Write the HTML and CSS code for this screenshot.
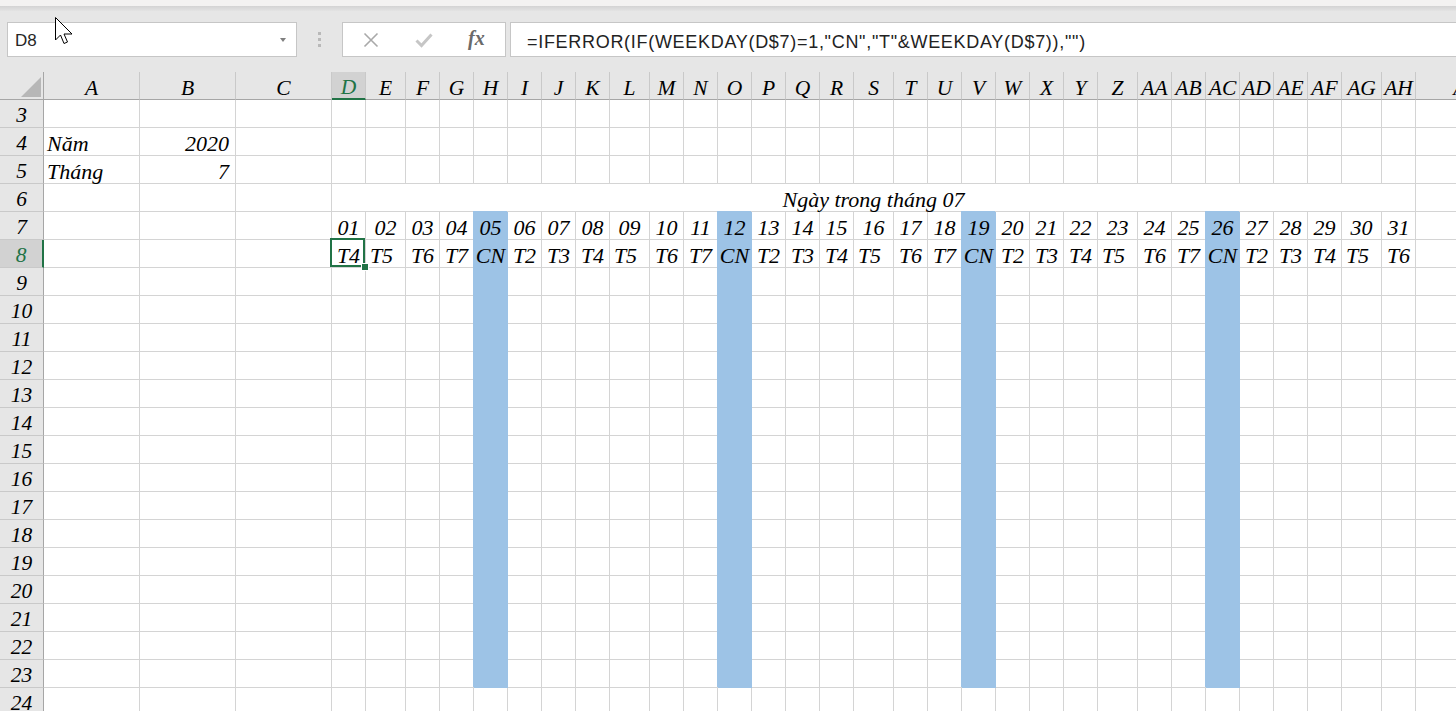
FILE: index.html
```html
<!DOCTYPE html>
<html lang="vi">
<head>
<meta charset="utf-8">
<title>Excel - Ngày trong tháng</title>
<link rel="stylesheet" href="styles.css">
</head>
<body>
<div class="app">
  <div class="titlestrip"></div>
  <div class="shade"></div>
  <div class="fbar">
    <div class="namebox"><span class="ref">D8</span><span class="caret"></span></div>
    <div class="grip"><span></span><span></span><span></span></div>
    <div class="fbtns">
      <svg class="ico-x" width="16" height="16" viewBox="0 0 16 16"><path d="M1.5 1.5 L14.5 14.5 M14.5 1.5 L1.5 14.5" fill="none" stroke="#a9a9a9" stroke-width="1.6"/></svg>
      <svg class="ico-ok" width="18" height="16" viewBox="0 0 18 16"><path d="M1.5 8.5 L6.5 13.5 L16.5 2.5" fill="none" stroke="#c6c6c6" stroke-width="3"/></svg>
      <span class="fx">fx</span>
    </div>
    <div class="finput">=IFERROR(IF(WEEKDAY(D$7)=1,"CN","T"&amp;WEEKDAY(D$7)),"")</div>
  </div>

  <div class="sheet">
    <!-- header -->
    <div class="corner"><svg width="20" height="20" viewBox="0 0 20 20"><polygon points="20,0 20,20 0,20" fill="#b7b7b7"/></svg></div>
    <div class="ch">A</div><div class="ch">B</div><div class="ch">C</div><div class="ch sel">D</div><div class="ch">E</div>
    <div class="ch">F</div><div class="ch">G</div><div class="ch">H</div><div class="ch">I</div><div class="ch">J</div>
    <div class="ch">K</div><div class="ch">L</div><div class="ch">M</div><div class="ch">N</div><div class="ch">O</div>
    <div class="ch">P</div><div class="ch">Q</div><div class="ch">R</div><div class="ch">S</div><div class="ch">T</div>
    <div class="ch">U</div><div class="ch">V</div><div class="ch">W</div><div class="ch">X</div><div class="ch">Y</div>
    <div class="ch">Z</div><div class="ch">AA</div><div class="ch">AB</div><div class="ch">AC</div><div class="ch">AD</div>
    <div class="ch">AE</div><div class="ch">AF</div><div class="ch">AG</div><div class="ch">AH</div><div class="ch">AI</div>

    <!-- row 3 -->
    <div class="rh">3</div>
    <div></div><div></div><div></div><div></div><div></div>
    <div></div><div></div><div></div><div></div><div></div>
    <div></div><div></div><div></div><div></div><div></div>
    <div></div><div></div><div></div><div></div><div></div>
    <div></div><div></div><div></div><div></div><div></div>
    <div></div><div></div><div></div><div></div><div></div>
    <div></div><div></div><div></div><div></div><div></div>

    <!-- row 4 -->
    <div class="rh">4</div>
    <div class="l">Năm</div><div class="r">2020</div>
    <div></div><div></div><div></div><div></div><div></div>
    <div></div><div></div><div></div><div></div><div></div>
    <div></div><div></div><div></div><div></div><div></div>
    <div></div><div></div><div></div><div></div><div></div>
    <div></div><div></div><div></div><div></div><div></div>
    <div></div><div></div><div></div><div></div><div></div>
    <div></div><div></div><div></div>

    <!-- row 5 -->
    <div class="rh">5</div>
    <div class="l">Tháng</div><div class="r">7</div>
    <div></div><div></div><div></div><div></div><div></div>
    <div></div><div></div><div></div><div></div><div></div>
    <div></div><div></div><div></div><div></div><div></div>
    <div></div><div></div><div></div><div></div><div></div>
    <div></div><div></div><div></div><div></div><div></div>
    <div></div><div></div><div></div><div></div><div></div>
    <div></div><div></div><div></div>

    <!-- row 6 -->
    <div class="rh">6</div>
    <div></div><div></div><div></div>
    <div class="merged">Ngày trong tháng 07</div>
    <div></div>

    <!-- row 7 -->
    <div class="rh">7</div>
    <div></div><div></div><div></div>
    <div>01</div><div>02</div><div>03</div><div>04</div><div class="b">05</div><div>06</div><div>07</div>
    <div>08</div><div>09</div><div>10</div><div>11</div><div class="b">12</div><div>13</div><div>14</div>
    <div>15</div><div>16</div><div>17</div><div>18</div><div class="b">19</div><div>20</div><div>21</div>
    <div>22</div><div>23</div><div>24</div><div>25</div><div class="b">26</div><div>27</div><div>28</div>
    <div>29</div><div>30</div><div>31</div>
    <div></div>

    <!-- row 8 -->
    <div class="rh sel">8</div>
    <div></div><div></div><div></div>
    <div class="active">T4</div><div class="w">T5</div><div>T6</div><div>T7</div><div class="b">CN</div><div>T2</div><div>T3</div>
    <div>T4</div><div class="w">T5</div><div>T6</div><div>T7</div><div class="b">CN</div><div>T2</div><div>T3</div>
    <div>T4</div><div class="w">T5</div><div>T6</div><div>T7</div><div class="b">CN</div><div>T2</div><div>T3</div>
    <div>T4</div><div class="w">T5</div><div>T6</div><div>T7</div><div class="b">CN</div><div>T2</div><div>T3</div>
    <div>T4</div><div class="w">T5</div><div>T6</div>
    <div></div>

    <!-- rows 9-23 -->
    <div class="rh">9</div>
    <div></div><div></div><div></div><div></div><div></div><div></div><div></div><div class="b"></div>
    <div></div><div></div><div></div><div></div><div></div><div></div><div class="b"></div>
    <div></div><div></div><div></div><div></div><div></div><div></div><div class="b"></div>
    <div></div><div></div><div></div><div></div><div></div><div></div><div class="b"></div>
    <div></div><div></div><div></div><div></div><div></div><div></div>

    <div class="rh">10</div>
    <div></div><div></div><div></div><div></div><div></div><div></div><div></div><div class="b"></div>
    <div></div><div></div><div></div><div></div><div></div><div></div><div class="b"></div>
    <div></div><div></div><div></div><div></div><div></div><div></div><div class="b"></div>
    <div></div><div></div><div></div><div></div><div></div><div></div><div class="b"></div>
    <div></div><div></div><div></div><div></div><div></div><div></div>

    <div class="rh">11</div>
    <div></div><div></div><div></div><div></div><div></div><div></div><div></div><div class="b"></div>
    <div></div><div></div><div></div><div></div><div></div><div></div><div class="b"></div>
    <div></div><div></div><div></div><div></div><div></div><div></div><div class="b"></div>
    <div></div><div></div><div></div><div></div><div></div><div></div><div class="b"></div>
    <div></div><div></div><div></div><div></div><div></div><div></div>

    <div class="rh">12</div>
    <div></div><div></div><div></div><div></div><div></div><div></div><div></div><div class="b"></div>
    <div></div><div></div><div></div><div></div><div></div><div></div><div class="b"></div>
    <div></div><div></div><div></div><div></div><div></div><div></div><div class="b"></div>
    <div></div><div></div><div></div><div></div><div></div><div></div><div class="b"></div>
    <div></div><div></div><div></div><div></div><div></div><div></div>

    <div class="rh">13</div>
    <div></div><div></div><div></div><div></div><div></div><div></div><div></div><div class="b"></div>
    <div></div><div></div><div></div><div></div><div></div><div></div><div class="b"></div>
    <div></div><div></div><div></div><div></div><div></div><div></div><div class="b"></div>
    <div></div><div></div><div></div><div></div><div></div><div></div><div class="b"></div>
    <div></div><div></div><div></div><div></div><div></div><div></div>

    <div class="rh">14</div>
    <div></div><div></div><div></div><div></div><div></div><div></div><div></div><div class="b"></div>
    <div></div><div></div><div></div><div></div><div></div><div></div><div class="b"></div>
    <div></div><div></div><div></div><div></div><div></div><div></div><div class="b"></div>
    <div></div><div></div><div></div><div></div><div></div><div></div><div class="b"></div>
    <div></div><div></div><div></div><div></div><div></div><div></div>

    <div class="rh">15</div>
    <div></div><div></div><div></div><div></div><div></div><div></div><div></div><div class="b"></div>
    <div></div><div></div><div></div><div></div><div></div><div></div><div class="b"></div>
    <div></div><div></div><div></div><div></div><div></div><div></div><div class="b"></div>
    <div></div><div></div><div></div><div></div><div></div><div></div><div class="b"></div>
    <div></div><div></div><div></div><div></div><div></div><div></div>

    <div class="rh">16</div>
    <div></div><div></div><div></div><div></div><div></div><div></div><div></div><div class="b"></div>
    <div></div><div></div><div></div><div></div><div></div><div></div><div class="b"></div>
    <div></div><div></div><div></div><div></div><div></div><div></div><div class="b"></div>
    <div></div><div></div><div></div><div></div><div></div><div></div><div class="b"></div>
    <div></div><div></div><div></div><div></div><div></div><div></div>

    <div class="rh">17</div>
    <div></div><div></div><div></div><div></div><div></div><div></div><div></div><div class="b"></div>
    <div></div><div></div><div></div><div></div><div></div><div></div><div class="b"></div>
    <div></div><div></div><div></div><div></div><div></div><div></div><div class="b"></div>
    <div></div><div></div><div></div><div></div><div></div><div></div><div class="b"></div>
    <div></div><div></div><div></div><div></div><div></div><div></div>

    <div class="rh">18</div>
    <div></div><div></div><div></div><div></div><div></div><div></div><div></div><div class="b"></div>
    <div></div><div></div><div></div><div></div><div></div><div></div><div class="b"></div>
    <div></div><div></div><div></div><div></div><div></div><div></div><div class="b"></div>
    <div></div><div></div><div></div><div></div><div></div><div></div><div class="b"></div>
    <div></div><div></div><div></div><div></div><div></div><div></div>

    <div class="rh">19</div>
    <div></div><div></div><div></div><div></div><div></div><div></div><div></div><div class="b"></div>
    <div></div><div></div><div></div><div></div><div></div><div></div><div class="b"></div>
    <div></div><div></div><div></div><div></div><div></div><div></div><div class="b"></div>
    <div></div><div></div><div></div><div></div><div></div><div></div><div class="b"></div>
    <div></div><div></div><div></div><div></div><div></div><div></div>

    <div class="rh">20</div>
    <div></div><div></div><div></div><div></div><div></div><div></div><div></div><div class="b"></div>
    <div></div><div></div><div></div><div></div><div></div><div></div><div class="b"></div>
    <div></div><div></div><div></div><div></div><div></div><div></div><div class="b"></div>
    <div></div><div></div><div></div><div></div><div></div><div></div><div class="b"></div>
    <div></div><div></div><div></div><div></div><div></div><div></div>

    <div class="rh">21</div>
    <div></div><div></div><div></div><div></div><div></div><div></div><div></div><div class="b"></div>
    <div></div><div></div><div></div><div></div><div></div><div></div><div class="b"></div>
    <div></div><div></div><div></div><div></div><div></div><div></div><div class="b"></div>
    <div></div><div></div><div></div><div></div><div></div><div></div><div class="b"></div>
    <div></div><div></div><div></div><div></div><div></div><div></div>

    <div class="rh">22</div>
    <div></div><div></div><div></div><div></div><div></div><div></div><div></div><div class="b"></div>
    <div></div><div></div><div></div><div></div><div></div><div></div><div class="b"></div>
    <div></div><div></div><div></div><div></div><div></div><div></div><div class="b"></div>
    <div></div><div></div><div></div><div></div><div></div><div></div><div class="b"></div>
    <div></div><div></div><div></div><div></div><div></div><div></div>

    <div class="rh">23</div>
    <div></div><div></div><div></div><div></div><div></div><div></div><div></div><div class="b"></div>
    <div></div><div></div><div></div><div></div><div></div><div></div><div class="b"></div>
    <div></div><div></div><div></div><div></div><div></div><div></div><div class="b"></div>
    <div></div><div></div><div></div><div></div><div></div><div></div><div class="b"></div>
    <div></div><div></div><div></div><div></div><div></div><div></div>

    <!-- row 24 -->
    <div class="rh">24</div>
    <div></div><div></div><div></div><div></div><div></div>
    <div></div><div></div><div></div><div></div><div></div>
    <div></div><div></div><div></div><div></div><div></div>
    <div></div><div></div><div></div><div></div><div></div>
    <div></div><div></div><div></div><div></div><div></div>
    <div></div><div></div><div></div><div></div><div></div>
    <div></div><div></div><div></div><div></div><div></div>
  </div>

  <svg class="cursor" width="20" height="30" viewBox="0 0 20 30"><path d="M0.5 0.5 L0.5 23 L5.5 18 L9 26.5 L12.5 25 L9 17 L17 17 Z" fill="#fff" stroke="#000" stroke-width="1" stroke-linejoin="miter"/></svg>
</div>
</body>
</html>
```

FILE: styles.css
```css
html, body {
  margin: 0;
  padding: 0;
}

body {
  width: 1456px;
  height: 711px;
  overflow: hidden;
  background: #ffffff;
  font-family: "Liberation Sans", Arial, sans-serif;
}

.app {
  position: relative;
  width: 1456px;
  height: 711px;
  overflow: hidden;
  background: #e6e6e6;
}

.titlestrip {
  height: 6px;
  background: #f3f2f1;
}

.shade {
  height: 5px;
  background: linear-gradient(#d3d3d3, #e3e3e3);
}

/* formula bar */
.fbar {
  display: flex;
  align-items: stretch;
  height: 35px;
  padding: 11px 0 15px 7px;
}

.namebox {
  box-sizing: border-box;
  width: 290px;
  flex-shrink: 0;
  border: 1px solid #c6c6c6;
  background: #ffffff;
  display: flex;
  align-items: center;
  justify-content: space-between;
  padding: 3px 10px 0 7px;
  font-size: 17px;
  color: #262626;
}

.caret {
  width: 0;
  height: 0;
  border-left: 3.5px solid transparent;
  border-right: 3.5px solid transparent;
  border-top: 4px solid #7f7f7f;
  margin-top: -3px;
}

.grip {
  width: 45px;
  flex-shrink: 0;
  display: flex;
  flex-direction: column;
  align-items: center;
  justify-content: center;
  gap: 3px;
}

.grip span {
  display: block;
  width: 3px;
  height: 3px;
  background: #b9b9b9;
}

.fbtns {
  box-sizing: border-box;
  width: 164px;
  flex-shrink: 0;
  border: 1px solid #c6c6c6;
  background: #ffffff;
  display: flex;
  align-items: center;
  padding-left: 20px;
}

.ico-ok {
  margin-left: 36px;
}

.fx {
  margin-left: 35px;
  font-family: "Liberation Serif", "Times New Roman", serif;
  font-style: italic;
  font-weight: bold;
  font-size: 20px;
  color: #6a6a6a;
  margin-top: -2px;
}

.finput {
  box-sizing: border-box;
  width: 1100px;
  flex-shrink: 0;
  margin-left: 4px;
  border: 1px solid #c6c6c6;
  border-right: none;
  background: #ffffff;
  display: flex;
  align-items: center;
  padding: 5px 0 0 16px;
  font-size: 18px;
  letter-spacing: 0.7px;
  color: #222222;
  white-space: nowrap;
}

/* sheet grid */
.sheet {
  display: grid;
  grid-template-columns:
    44px 96px 96px 96px
    34px 40px repeat(6, 34px)
    40px repeat(6, 34px)
    40px repeat(6, 34px)
    40px repeat(6, 34px)
    40px 34px 96px;
  grid-auto-rows: 28px;
  width: 1512px;
  background: #ffffff;
  font-family: "Liberation Serif", "Times New Roman", serif;
  font-style: italic;
  font-size: 22px;
  color: #000000;
}

.sheet > div {
  box-sizing: border-box;
  min-width: 0;
  border-right: 1px solid #d4d4d4;
  border-bottom: 1px solid #d4d4d4;
  display: flex;
  align-items: flex-end;
  justify-content: center;
  padding-bottom: 0;
  line-height: 22px;
  white-space: nowrap;
}

.sheet > .corner {
  background: #e6e6e6;
  border-right-color: #a6a6a6;
  border-bottom-color: #a6a6a6;
  justify-content: flex-end;
  padding: 0 2px 2px 0;
}

.corner svg {
  display: block;
}

.sheet > .ch {
  background: #e6e6e6;
  border-right-color: #c9c9c9;
  border-bottom-color: #a6a6a6;
  font-size: 21.5px;
  line-height: 21px;
  padding-bottom: 0;
}

.sheet > .ch.sel {
  background: #d2d2d2;
  border-bottom: 2px solid #217346;
  color: #217346;
}

.sheet > .rh {
  background: #e6e6e6;
  border-right-color: #a6a6a6;
  border-bottom-color: #c9c9c9;
  font-size: 21.5px;
  line-height: 21px;
  padding-bottom: 1px;
}

.sheet > .rh.sel {
  background: #d2d2d2;
  border-right: 2px solid #217346;
  color: #217346;
}

.sheet > .l {
  justify-content: flex-start;
  padding-left: 3px;
}

.sheet > .r {
  justify-content: flex-end;
  padding-right: 6px;
}

.sheet > .merged {
  grid-column: span 31;
}

.sheet > .w {
  padding-right: 8px;
}

.sheet > .b {
  background: #9dc3e6;
  border-right-color: #9dc3e6;
  border-bottom-color: #9dc3e6;
  box-shadow: -1px -1px 0 0 #9dc3e6;
}

.sheet > .active {
  position: relative;
}

.sheet > .active::before {
  content: "";
  position: absolute;
  left: -2px;
  top: -2px;
  right: 0;
  bottom: 0;
  border: 2px solid #217346;
}

.sheet > .active::after {
  content: "";
  position: absolute;
  left: 29px;
  top: 23px;
  width: 6px;
  height: 6px;
  background: #217346;
  border: 1px solid #ffffff;
}

.cursor {
  position: absolute;
  left: 55px;
  top: 17px;
}
```
